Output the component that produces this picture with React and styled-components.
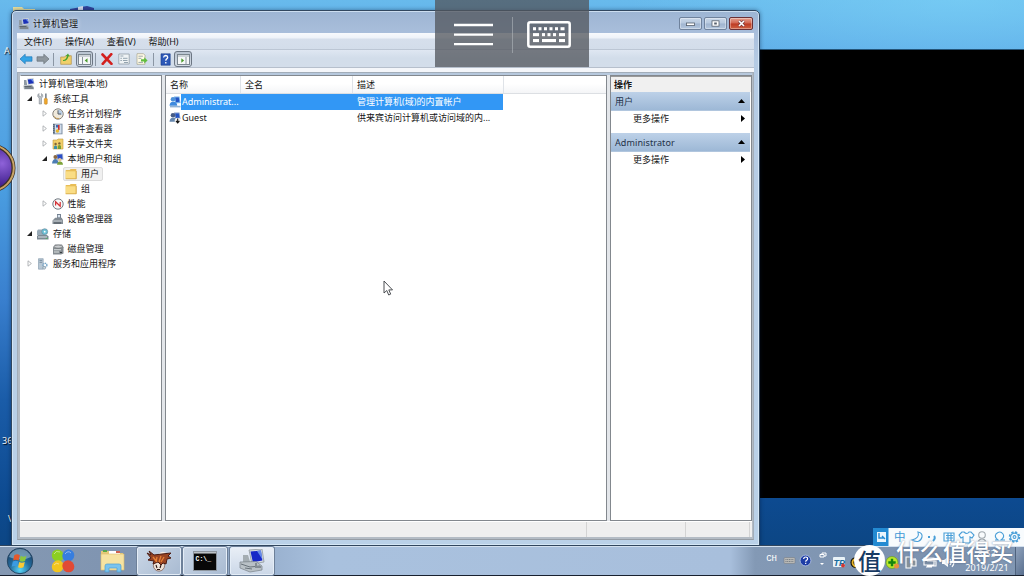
import React from 'react';
import styled, { createGlobalStyle } from 'styled-components';

const GlobalStyle = createGlobalStyle`
    * { box-sizing: border-box; }
    body {
        margin: 0;
        overflow: hidden;
        font: 9px/15px "Noto Sans", "Noto Sans CJK SC", sans-serif;
        color: #151515;
        cursor: default;
    }
    svg { display: block; flex-shrink: 0; }
`;

const Desktop = styled('div')`
    position: relative;
    width: 1024px;
    height: 576px;
    overflow: hidden;
    background:
        radial-gradient(ellipse 330px 90px at 960px 0, rgba(125,212,248,.6), transparent),
        linear-gradient(#68baec 0, #5eace8 50px, #4a9de0 190px, #397fce 300px, #1a5ca8 400px, #0d4a90 500px, #0c4684 546px);
`;

const BlackScreen = styled('div')`
    position: absolute;
    left: 759px;
    top: 49px;
    width: 265px;
    height: 449px;
    background: #000;
    border-top: 1px solid #245478;
`;

const Wallpaper = styled('svg')`
    position: absolute;
    left: 0;
    top: 0;
`;

const FloatingBall = styled('svg')`
    position: absolute;
    left: 0;
    top: 140px;
`;

const DesktopLabel = styled('span')`
    position: absolute;
    left: ${props => props.$x}px;
    top: ${props => props.$y}px;
    color: #f2f6fa;
    text-shadow: 1px 1px 1px #000;
`;

const Window = styled('div')`
    position: absolute;
    left: 11px;
    top: 10px;
    width: 749px;
    height: 536px;
    display: flex;
    flex-direction: column;
    padding: 0 5px 5px;
    border: 1px solid #31475f;
    border-radius: 5px 5px 0 0;
    background: linear-gradient(#9db5d3 0, #a9bedb 22px, #b5cbe4 50px, #bad1e8 100%);
    box-shadow: inset 0 0 0 1px rgba(220,236,250,.75), 0 0 4px rgba(0,20,50,.45);
`;

const TitleBar = styled('div')`
    display: flex;
    align-items: center;
    height: 22px;
    padding: 3px 0 0 1px;
    gap: 3px;
    flex-shrink: 0;
`;

const Title = styled('span')`
    flex: 1;
    text-shadow: 0 0 5px #fff;
`;

const WindowButtons = styled('div')`
    display: flex;
    gap: 2px;
    padding-right: 1px;
`;

const WindowButton = styled('div')`
    display: flex;
    align-items: center;
    justify-content: center;
    width: ${props => props.$close ? 24 : 23}px;
    height: 13px;
    border: 1px solid ${props => props.$close ? '#6b3035' : '#6f829c'};
    border-radius: 2px;
    background: ${props => props.$close
        ? 'linear-gradient(#e3a08f, #d2634e 48%, #bd3a22 52%, #cf6244)'
        : 'linear-gradient(#c9d7e8, #b7c9df 48%, #9fb4cf 52%, #b4c7de)'};
    box-shadow: inset 0 0 0 1px rgba(255,255,255,.35);
`;

const MenuBar = styled('div')`
    display: flex;
    align-items: center;
    gap: 12.8px;
    height: 17px;
    padding-left: 7px;
    flex-shrink: 0;
    background: linear-gradient(#f8fafd 0, #eef2f9 5px, #d6dfec 6px, #d3ddea 16px);
    border-bottom: 1px solid #bcc6d4;
`;

const ToolBar = styled('div')`
    display: flex;
    align-items: center;
    height: 18px;
    padding-top: 1px;
    flex-shrink: 0;
    background: linear-gradient(#dfe7f2, #d2ddea 8px, #d3ddea);
    border-bottom: 1px solid #b6bfcc;
`;

const Tool = styled('div')`
    display: flex;
    align-items: center;
    justify-content: center;
    width: ${props => props.$w || 17}px;
    height: 16px;
    border: ${props => props.$pressed ? '1px solid #6c7683' : 'none'};
    border-radius: 3px;
    background: ${props => props.$pressed ? 'linear-gradient(#b9c4d1, #d5dde7)' : 'none'};
`;

const ToolSeparator = styled('div')`
    width: 1px;
    height: 13px;
    margin: 0 ${props => props.$gap || 3}px;
    background: #8b96a4;
`;

const Client = styled('div')`
    flex: 1;
    display: flex;
    flex-direction: column;
    min-height: 0;
    padding: 0 1px 2px 2px;
    margin-top: 4px;
    border: 1px solid #a2adb9;
    border-bottom-color: #969da5;
    background: #b4bcc5;
`;

const Strip = styled('div')`
    height: 4px;
    margin-bottom: -4px;
    background: #f4f6fa;
    flex-shrink: 0;
`;

const Panes = styled('div')`
    flex: 1;
    display: flex;
    gap: 3px;
    padding-top: 2px;
    min-height: 0;
    background: linear-gradient(#b6c8dd 2px, #e3e6ea 2px);
`;

const Pane = styled('div')`
    width: ${props => props.$w}px;
    flex: ${props => props.$grow ? 1 : 'none'};
    overflow: hidden;
    background: #fff;
    border: 1px solid #83888e;
    border-left-color: ${props => props.$first ? '#fff' : '#83888e'};
    white-space: nowrap;
`;

const StatusBar = styled('div')`
    display: flex;
    justify-content: flex-end;
    height: 16px;
    flex-shrink: 0;
    background: #efefef;
    border-top: 1px solid #fff;
`;

const StatusCell = styled('div')`
    width: ${props => props.$w}px;
    border-left: 1px solid #d4d4d4;
`;

const TreeRow = styled('div')`
    display: flex;
    align-items: center;
    height: 15px;
    padding-left: ${props => props.$indent}px;
`;

const Arrow = styled('div')`
    width: 10px;
    display: flex;
`;

const TreeLabel = styled('span')`
    display: flex;
    align-items: center;
    gap: 4px;
    height: 14px;
    margin-left: ${props => props.$selected ? -2 : 0}px;
    padding: 0 ${props => props.$selected ? '3px 0 1px' : 0};
    border: ${props => props.$selected ? '1px solid #dcdcdc' : 'none'};
    border-radius: 2px;
    background: ${props => props.$selected ? '#f0f0f0' : 'none'};
`;

const ListHeader = styled('div')`
    display: flex;
    height: 18px;
    border-bottom: 1px solid #dcdfe3;
    background: linear-gradient(#fff, #fff 45%, #f4f5f7);
`;

const HeaderCell = styled('div')`
    width: ${props => props.$w}px;
    padding-left: ${props => props.$pad || 4}px;
    line-height: 17px;
    border-right: 1px solid #dfe3e8;
`;

const ListRow = styled('div')`
    display: flex;
    align-items: center;
    height: 16px;
    padding-left: 3px;
`;

const RowCells = styled('div')`
    display: flex;
    width: 322px;
    height: 16px;
    line-height: 16px;
    color: ${props => props.$selected ? '#fff' : '#151515'};
    background: ${props => props.$selected ? '#3297f5' : 'none'};
`;

const NameCell = styled('span')`
    width: 176px;
    padding-left: 1px;
`;

const ActionsTitle = styled('div')`
    height: 16px;
    padding-left: 3px;
    line-height: 16px;
    font-weight: bold;
    background: #f0f0f0;
    border-top: 1px solid #999;
`;

const ActionGroup = styled('div')`
    display: flex;
    align-items: center;
    justify-content: space-between;
    height: 19px;
    margin-right: 1px;
    padding: 0 5px 0 4px;
    color: #1e3148;
    background: linear-gradient(#bdd1e8, #9db8d6);
    border-bottom: 1px solid #b1c6de;
    letter-spacing: .1px;
`;

const ActionItem = styled('div')`
    display: flex;
    align-items: center;
    justify-content: space-between;
    height: 15px;
    margin-bottom: 7px;
    padding: 0 6px 0 22px;
`;

const Overlay = styled('div')`
    position: absolute;
    left: 435px;
    top: 0;
    width: 154px;
    height: 67px;
    display: flex;
    align-items: center;
    padding: 2px 0 0 19px;
    background: rgba(82,86,92,.76);
`;

const OverlayDivider = styled('div')`
    width: 1px;
    height: 36px;
    margin: 0 14px 0 19px;
    background: rgba(190,195,200,.5);
`;

const Taskbar = styled('div')`
    position: absolute;
    left: 0;
    bottom: 0;
    width: 1024px;
    height: 30px;
    display: flex;
    align-items: center;
    border-top: 1px solid #d3e0ee;
    border-bottom: 1px solid #18202e;
    box-shadow: 0 -1px 0 #31465e;
    background: linear-gradient(90deg, #8498b2 0, #7f94b1 130px, #9ab2d0 275px, #a9c1de 330px, #a8bfdc 730px, #8399b5 755px, #7c92af 900px, #8197b3 100%);
`;

const TaskSlot = styled('div')`
    display: flex;
    align-items: center;
    justify-content: center;
    width: ${props => props.$w || 44}px;
    height: 28px;
    margin-right: ${props => props.$gap || 0}px;
    border: ${props => props.$open ? '1px solid #e4edf7' : 'none'};
    border-radius: 2px;
    background: ${props => props.$active
        ? 'linear-gradient(#e8eef6, #ccd8e8)'
        : props.$open ? 'linear-gradient(135deg, #c9d6e6, #a9bbd2)' : 'none'};
    box-shadow: ${props => props.$open ? '0 0 0 1px #6d8099' : 'none'};
`;

const Tray = styled('div')`
    display: flex;
    align-items: center;
    margin-left: auto;
    height: 28px;
`;

const Language = styled('span')`
    margin: -4px 6px 0 0;
    color: #fff;
    font: 9px "Liberation Mono", monospace;
`;

const Notifications = styled('div')`
    margin-right: -8px;
`;

const Clock = styled('div')`
    width: 56px;
    display: flex;
    flex-direction: column;
    align-items: center;
    color: #fff;
    line-height: 14px;
    letter-spacing: .1px;
`;

const ShowDesktop = styled('div')`
    width: 9px;
    height: 28px;
    border-left: 1px solid #4f637e;
    background: linear-gradient(120deg, #90a3bd, #596f8e);
`;

const ImeBar = styled('div')`
    position: absolute;
    left: 873px;
    top: 528px;
    width: 151px;
    height: 18px;
    background: #f8fbfd;
`;

const Watermark = styled('div')`
    position: absolute;
    left: 854px;
    top: 545px;
    display: flex;
    color: #fff;
    font-family: "Noto Sans CJK SC", sans-serif;
`;

const WatermarkBadge = styled('span')`
    width: 31px;
    height: 31px;
    border-radius: 50%;
    background: #fff;
    color: #173a63;
    font-size: 23px;
    font-weight: 500;
    line-height: 30px;
    text-align: center;
`;

const WatermarkText = styled('span')`
    margin: -5px 0 0 11px;
    font-size: 23.5px;
    font-weight: 500;
    line-height: 22px;
    text-shadow: 0 0 2px rgba(60,80,110,.7);
`;

const Pointer = styled('svg')`
    position: absolute;
    left: 383px;
    top: 280px;
`;

const Svg = ({ w = 12, h = w, box, children }) => (
    <svg width={w} height={h} viewBox={box || '0 0 12 12'}>{children}</svg>
);

const ComputerIcon = ({ size = 12 }) => (
    <Svg w={size}>
        <path d="M4 0.8 10.5 0 11.5 6 5 7z" fill="#cbd2d8" />
        <path d="M4.8 1.6 9.8 1 10.7 5.3 5.6 6.1z" fill="#1b32b8" />
        <path d="M7.6 1.3 9.8 1 10.5 4.6z" fill="#6c90ec" />
        <path d="M1 2h2.4l.8 5H1z" fill="#8f9aa4" />
        <path d="M0.5 7.5 9 7l2 2.3v1.9H1z" fill="#9ca5ad" />
        <path d="M1.5 8.5h7M2 10h8" stroke="#4c555d" strokeWidth=".8" />
    </Svg>
);

const ToolsIcon = () => (
    <Svg>
        <path d="M2 .5v2.3l1.2 1 1.2-1V.5l1.3 1.3v2L4.5 5v6H2.2V5L.8 3.8v-2z" fill="#bdc3c8" stroke="#747d85" strokeWidth=".5" />
        <path d="M8 .5h1.700v5H8z" fill="#818b94" />
        <rect x="7.3" y="5.3" width="3" height="6" rx="1" fill="#f0a62a" stroke="#a9731d" strokeWidth=".4" />
    </Svg>
);

const ClockIcon = () => (
    <Svg>
        <circle cx="6" cy="6" r="5.2" fill="#efe9dc" stroke="#85817b" />
        <path d="M6 6V1.500A4.500 4.500 0 0 1 10.400 7z" fill="#b6cce4" />
        <path d="M6 2.300V6h3" fill="none" stroke="#595d63" />
        <path d="M2 8.500a5 5 0 0 0 5 2" fill="none" stroke="#c29b58" />
    </Svg>
);

const EventIcon = () => (
    <Svg>
        <path d="M1 .7h9.500v10.600H1z" fill="#7c8da1" />
        <path d="M3 1.500h6.500v9H3z" fill="#d3dfed" />
        <path d="M4 2h2v2.500H4z" fill="#3c68b4" />
        <path d="M6.800 2v5" stroke="#cf2d2d" strokeWidth="1.6" />
        <circle cx="5.4" cy="8" r="1.7" fill="#e6b72d" />
        <path d="M1.800 1v10" stroke="#475463" strokeDasharray="1 1" />
    </Svg>
);

const ShareIcon = () => (
    <Svg>
        <path d="M1 2h4l1-1h5v10H1z" fill="#f1cf69" stroke="#c29b3e" strokeWidth=".6" />
        <circle cx="3.6" cy="6" r="1.2" fill="#806436" />
        <path d="M2 11V8.500q1.600-2 3 0V11z" fill="#3b8fa8" />
        <circle cx="7.4" cy="5.4" r="1.2" fill="#806436" />
        <path d="M5.800 11V8q1.600-2 3.200 0v3z" fill="#769e34" />
    </Svg>
);

const UsersIcon = () => (
    <Svg>
        <path d="M4 1 11 .4 11.5 7 5 7.4z" fill="#b9c6d5" />
        <path d="M5 1.8 10.2 1.2 10.6 6 5.8 6.3z" fill="#2b4ec6" />
        <circle cx="3.4" cy="4" r="2" fill="#8b6a43" />
        <path d="M0 10.5Q.5 6 3.4 6 6 6 6.7 10.5z" fill="#4d7db4" />
        <circle cx="7.8" cy="6.8" r="1.8" fill="#e5c394" />
        <path d="M5 11.7q.5-3.4 3-3.2 2.7 0 3 3.2z" fill="#7da339" />
    </Svg>
);

const FolderIcon = () => (
    <Svg>
        <path d="M.7 2h4l1-.9h5.6v9.7H.7z" fill="#e8bd56" />
        <path d="M.7 3.3h10v7.5H.7z" fill="#fadd85" />
        <path d="M.7 10.8h10.6V3" fill="none" stroke="#cf9e37" strokeWidth=".7" />
    </Svg>
);

const PerformanceIcon = () => (
    <Svg>
        <circle cx="6" cy="6" r="5.2" fill="#f7f7f7" stroke="#747b83" />
        <path d="M3.6 7.500V3.800l4.600 4.500V4" fill="none" stroke="#d53034" strokeWidth="1.2" />
        <path d="m2.6 3 1.500 1" stroke="#cd4044" strokeWidth=".8" />
    </Svg>
);

const DeviceIcon = () => (
    <Svg>
        <path d="M5 1h4v4.5H5z" fill="#758292" />
        <path d="M5.8 2H8v2.4H5.8z" fill="#d9e4ef" />
        <path d="m2 6 1.2-1.3h6.5L11 7v4H.5V7.5z" fill="#838c94" />
        <path d="M1.2 8h9" stroke="#cbd1d5" />
        <path d="M2 10h7" stroke="#495158" />
    </Svg>
);

const StorageIcon = () => (
    <Svg>
        <path d="M1 1.5h6L8 4v3H0V3z" fill="#98aab7" />
        <circle cx="7.7" cy="3.7" r="3" fill="#6cc0d6" stroke="#688393" strokeWidth=".6" />
        <circle cx="7.7" cy="3.7" r=".9" fill="#fff" />
        <path d="M1 7h9l1.5 1.6v3H0V8z" fill="#7d8993" />
        <path d="M1 9h9" stroke="#d9e0e5" />
        <path d="M8.8 10.4h1.6" stroke="#50b35c" />
    </Svg>
);

const DiskIcon = () => (
    <Svg>
        <path d="M1 4.2 3 1.5h7l1.5 2.7v6.2L9 11.5H1z" fill="#858c91" />
        <ellipse cx="6.2" cy="3.6" rx="4" ry="1.5" fill="#c9cdd0" stroke="#666" strokeWidth=".5" />
        <path d="M2 6.8h7M2 9h5" stroke="#dee1e2" strokeWidth="1.1" />
        <path d="M8 9.5h2" stroke="#373d40" />
    </Svg>
);

const ServicesIcon = () => (
    <Svg>
        <path d="M1.5.7h4.7v10.5H1.5z" fill="#b7c7d4" stroke="#7f95a7" strokeWidth=".6" />
        <path d="M2.5 2.4h2.6M2.5 4.3h2.6" stroke="#5e7486" strokeWidth=".7" />
        <circle cx="8" cy="7.2" r="1.9" fill="none" stroke="#74a5c8" strokeWidth="1.4" strokeDasharray="1.1 .5" />
        <circle cx="7.2" cy="9.8" r="1.4" fill="#c9d6df" stroke="#8799a6" strokeWidth=".7" />
    </Svg>
);

const UserIcon = ({ disabled }) => (
    <Svg>
        <path d="M5 .5h5.5L11.5 7 6 7.4z" fill={disabled ? '#7f99ca' : '#75b1ea'} />
        <path d="M6.3 1.4h3.5l.6 4.4-3.4.4z" fill="#2454c4" />
        <circle cx="4" cy="3.3" r="2.3" fill={disabled ? '#465c86' : '#4c91d9'} />
        <path d="M.5 9.8q.4-4.3 3.8-4 3.6 0 4 4z" fill={disabled ? '#6788af' : '#3f8ade'} />
        {disabled && <>
            <circle cx="8.7" cy="8.8" r="3" fill="#f4f4f4" />
            <path d="M8.7 6.5v4.2M7 8.9l1.7 2 1.7-2" fill="none" stroke="#111" strokeWidth="1.1" />
        </>}
        {!disabled && <path d="M1 10.6h10.500" stroke="#8fb2d6" strokeWidth="1.6" />}
    </Svg>
);

const NavArrow = ({ back }) => (
    <Svg w={14} h={12} box="0 0 14 12">
        <path
            d="M1 6 6.2 1.2v2.6H13v4.4H6.2v2.6z"
            transform={back ? undefined : 'matrix(-1 0 0 1 14 0)'}
            fill={back ? '#33a4e6' : '#8e979e'}
            stroke={back ? '#2379b9' : '#697178'}
            strokeWidth=".7"
        />
    </Svg>
);

const PaneIcon = ({ right }) => (
    <Svg w={13} h={11} box="0 0 13 11">
        <rect x=".5" y=".5" width="12" height="10" fill="#f5f7f8" stroke="#7c8790" />
        <path d="M1 2h11" stroke="#a5afb8" />
        <path d={right ? 'M9 3v7.5' : 'M4.5 3v7.5'} stroke="#89949d" />
        <path d={right ? 'm4.3 4.3 2.8 2.2-2.8 2.2z' : 'M9.5 4.3 6.7 6.5l2.8 2.2z'} fill="#4b9c2c" />
    </Svg>
);

const UpFolderIcon = () => (
    <Svg>
        <path d="M.7 4h4l1-1.3h5.6v8.6H.7z" fill="#f0d06b" stroke="#b3914a" strokeWidth=".7" />
        <path d="M3 7q3 0 4-4L5.5 3.2 8 .4l1.8 3-1.3-.2Q7.5 8.3 3 8z" fill="#46a431" />
    </Svg>
);

const DeleteIcon = () => (
    <Svg>
        <path d="m1.500 1.500 9 9.300M10.300 1.200l-8.600 9.600" stroke="#d3201e" strokeWidth="2.6" strokeLinecap="round" />
    </Svg>
);

const PropertiesIcon = () => (
    <Svg>
        <path d="M.8 1h10.4v10H.8z" fill="#eff3f5" stroke="#929da6" strokeWidth=".8" />
        <path d="M2.4 3h3M2.4 5.3h1.5M2.4 7.5h1.5M5 5.3h4.5M5 7.5h4.5M6 9.5h4" stroke="#94a4b0" />
    </Svg>
);

const ExportIcon = () => (
    <Svg>
        <path d="M1 .7h6.5L9 2.3v9H1z" fill="#fffbe6" stroke="#a7a48d" strokeWidth=".7" />
        <path d="M2.4 3.2h4.5M2.4 5.3h3M2.4 9.4H7" stroke="#85949c" strokeWidth=".8" />
        <path d="M5 6.3h3.2V4.2l3.4 3.2-3.4 3.2V8.5H5z" fill="#61bd40" />
    </Svg>
);

const HelpIcon = () => (
    <Svg w={11} h={13} box="0 0 11 13">
        <path d="M1 .8h9.2v11.4H1z" fill="#2c58b8" stroke="#193b86" strokeWidth=".6" />
        <path d="M3.6 4.5q.2-2 2.1-2 2 .1 2 1.7 0 1-1 1.7-.9.6-.9 1.8M5.8 9v1.4" fill="none" stroke="#fff" strokeWidth="1.3" />
    </Svg>
);

const ExpandArrow = ({ open }) => (
    <Svg w={6} h={7} box="0 0 6 7">
        {open
            ? <path d="M5 1v5H0z" fill="#222" />
            : <path d="m1 .8 3.4 2.7L1 6.2z" fill="#fff" stroke="#a1a4a8" strokeWidth=".8" />}
    </Svg>
);

const TREE = [
    { label: '计算机管理(本地)', Icon: ComputerIcon, indent: 2, root: true },
    { label: '系统工具', Icon: ToolsIcon, indent: 6, open: true },
    { label: '任务计划程序', Icon: ClockIcon, indent: 20.5, open: false },
    { label: '事件查看器', Icon: EventIcon, indent: 20.5, open: false },
    { label: '共享文件夹', Icon: ShareIcon, indent: 20.5, open: false },
    { label: '本地用户和组', Icon: UsersIcon, indent: 20.5, open: true },
    { label: '用户', Icon: FolderIcon, indent: 34, selected: true },
    { label: '组', Icon: FolderIcon, indent: 34 },
    { label: '性能', Icon: PerformanceIcon, indent: 20.5, open: false },
    { label: '设备管理器', Icon: DeviceIcon, indent: 20.5 },
    { label: '存储', Icon: StorageIcon, indent: 6, open: true },
    { label: '磁盘管理', Icon: DiskIcon, indent: 20.5 },
    { label: '服务和应用程序', Icon: ServicesIcon, indent: 6, open: false }
];

const USERS = [
    { name: 'Administrat...', description: '管理计算机(域)的内置帐户', selected: true },
    { name: 'Guest', description: '供来宾访问计算机或访问域的内...', disabled: true }
];

const Tree = () => (
    <Pane $w={142} $first>
        {TREE.map(({ label, Icon, indent, open, selected, root }) => (
            <TreeRow key={label} $indent={indent}>
                {!root && <Arrow>{open !== undefined && <ExpandArrow open={open} />}</Arrow>}
                <TreeLabel $selected={selected}><Icon />{label}</TreeLabel>
            </TreeRow>
        ))}
    </Pane>
);

const UserList = () => (
    <Pane $grow>
        <ListHeader>
            <HeaderCell $w={75}>名称</HeaderCell>
            <HeaderCell $w={112}>全名</HeaderCell>
            <HeaderCell $w={151}>描述</HeaderCell>
        </ListHeader>
        {USERS.map(user => (
            <ListRow key={user.name}>
                <UserIcon disabled={user.disabled} />
                <RowCells $selected={user.selected}>
                    <NameCell>{user.name}</NameCell>
                    <span>{user.description}</span>
                </RowCells>
            </ListRow>
        ))}
    </Pane>
);

const Actions = () => (
    <Pane $w={142}>
        <ActionsTitle>操作</ActionsTitle>
        {['用户', 'Administrator'].map(group => (
            <React.Fragment key={group}>
                <ActionGroup>
                    {group}
                    <Svg w={7} h={4} box="0 0 7 4"><path d="M3.5 0 7 4H0z" fill="#000" /></Svg>
                </ActionGroup>
                <ActionItem>
                    更多操作
                    <Svg w={4} h={7} box="0 0 4 7"><path d="m0 0 4 3.5L0 7z" fill="#000" /></Svg>
                </ActionItem>
            </React.Fragment>
        ))}
    </Pane>
);

const ManagementWindow = () => (
    <Window>
        <TitleBar>
            <ComputerIcon />
            <Title>计算机管理</Title>
            <WindowButtons>
                <WindowButton><Svg w={9} h={7} box="0 0 9 7"><rect x=".5" y="3" width="8" height="2.6" fill="#fff" stroke="#56606d" strokeWidth=".8" /></Svg></WindowButton>
                <WindowButton><Svg w={9} h={7} box="0 0 9 7"><rect x="1" y=".8" width="7" height="5.4" fill="#fff" stroke="#56606d" strokeWidth=".8" /><rect x="3.2" y="2.5" width="2.6" height="2" fill="#56606d" /></Svg></WindowButton>
                <WindowButton $close><Svg w={9} h={7} box="0 0 9 7"><path d="m2 1 5 5M7 1 2 6" stroke="#6b3035" strokeWidth="2.8" /><path d="m2 1 5 5M7 1 2 6" stroke="#fff" strokeWidth="1.7" /></Svg></WindowButton>
            </WindowButtons>
        </TitleBar>
        <MenuBar>
            <span>文件(F)</span>
            <span>操作(A)</span>
            <span>查看(V)</span>
            <span>帮助(H)</span>
        </MenuBar>
        <ToolBar>
            <Tool><NavArrow back /></Tool>
            <Tool><NavArrow /></Tool>
            <ToolSeparator $gap={2} />
            <Tool $w={20}><UpFolderIcon /></Tool>
            <Tool $pressed><PaneIcon /></Tool>
            <ToolSeparator $gap={2} />
            <Tool><DeleteIcon /></Tool>
            <Tool $w={18}><PropertiesIcon /></Tool>
            <Tool><ExportIcon /></Tool>
            <ToolSeparator />
            <Tool $w={17}><HelpIcon /></Tool>
            <Tool $w={18} $pressed><PaneIcon right /></Tool>
        </ToolBar>
        <Strip />
        <Client>
            <Panes>
                <Tree />
                <UserList />
                <Actions />
            </Panes>
            <StatusBar>
                <StatusCell $w={99} />
                <StatusCell $w={64} />
                <StatusCell $w={3} />
            </StatusBar>
        </Client>
    </Window>
);

const KEY_ROWS = [
    [[6, 3], [11.5, 3], [17, 3], [22.5, 3], [28, 3], [33.5, 4]],
    [[6, 6], [15, 3], [20.5, 3], [26, 3], [32, 6]],
    [[6, 6], [15, 14], [32, 6]]
];

const RemoteOverlay = () => (
    <Overlay>
        <Svg w={39} h={24} box="0 0 39 24">
            <path d="M0 2h39M0 11.6h39M0 21.2h39" stroke="#fff" strokeWidth="2.3" />
        </Svg>
        <OverlayDivider />
        <Svg w={44} h={27} box="0 0 44 27">
            <rect x="1.3" y="1.3" width="41.4" height="24.4" rx="2" fill="none" stroke="#fff" strokeWidth="2.5" />
            {KEY_ROWS.map((row, i) => row.map(([x, w]) => (
                <rect key={`${i}-${x}`} x={x} y={6.2 + i * 5.9} width={w} height="3.1" fill="#fff" />
            )))}
        </Svg>
    </Overlay>
);

const StartOrb = () => (
    <Svg w={28} box="0 0 28 28">
        <defs>
            <radialGradient id="orb" cx=".5" cy=".85" r=".8">
                <stop offset="0" stopColor="#58d4f5" />
                <stop offset=".5" stopColor="#246d9e" />
                <stop offset="1" stopColor="#1b3f66" />
            </radialGradient>
        </defs>
        <circle cx="14" cy="14" r="12.7" fill="url(#orb)" stroke="#254663" />
        <path d="M3 10Q6 2 14 2t11 8q-10 5-22 0" fill="#a9cadd" opacity=".55" />
        <path d="M8.3 8.300q2.900-1.900 5.600 0l-1.300 5.300q-2.500-1.500-5.500-.2z" fill="#e6592b" />
        <path d="M14.700 8.800q2.900 1.700 5.700 0l-1.300 5.200q-2.900 1.500-5.600 0z" fill="#8bc63e" />
        <path d="M6.800 14.500q2.800-1.500 5.500 0L11 19.700q-2.500-1.500-5.300 0z" fill="#3b9be2" />
        <path d="M13.200 15q2.600 1.500 5.600 0l-1.300 5.200q-2.900 1.500-5.400 0z" fill="#fbca35" />
    </Svg>
);

const PetalIcon = () => (
    <Svg w={24} box="0 0 24 24">
        <ellipse cx="6.8" cy="6.6" rx="6.2" ry="5.8" transform="rotate(45 6.8 6.6)" fill="#8ccf22" />
        <ellipse cx="17.3" cy="6.6" rx="6.2" ry="5.8" transform="rotate(-45 17.3 6.6)" fill="#377edf" />
        <ellipse cx="6.8" cy="17.3" rx="6.2" ry="5.8" transform="rotate(-45 6.8 17.3)" fill="#f3c51d" />
        <ellipse cx="17.3" cy="17.3" rx="6.2" ry="5.8" transform="rotate(45 17.3 17.3)" fill="#e14a35" />
        <path d="M3 5q2-4 6-2M14 5q3-4 6-1M3 16q2-3 5-1" fill="none" stroke="#fff" opacity=".45" />
    </Svg>
);

const ExplorerIcon = () => (
    <Svg w={25} h={24} box="0 0 25 24">
        <path d="M1 2h8l1 2h13v17H1z" fill="#e5c979" />
        <path d="M3 1h4v2H3z" fill="#57a74c" />
        <path d="M9 2h11v4H9z" fill="#fff" />
        <path d="M16 2h4v2h-4z" fill="#cf6150" />
        <path d="M1 5h23v16H1z" fill="#f6e3a2" stroke="#dbbd6d" strokeWidth=".6" />
        <path d="M5 23v-6q0-2 2-2h12q2 0 2 2v6h-4v-4H9v4z" fill="#7ac4ee" stroke="#4c9fd4" strokeWidth=".7" />
    </Svg>
);

const BugIcon = () => (
    <Svg w={26} h={22} box="0 0 26 22">
        <circle cx="17" cy="7" r="5.3" fill="#f5ece5" />
        <circle cx="13" cy="15.500" r="5.6" fill="#eee3da" stroke="#6a3a28" strokeWidth=".6" />
        <path d="m1 3 4 2-2-4 5 4 8-1 9-1-3 3 3 2-4 1-1 5-3-1-2 2-3-3-5 2 1-3-6-1 3-2z" fill="#9a4523" stroke="#4b1b12" />
        <path d="m7 7 4 5m0-5-1 5m5-6-2 6m5-5-3 5" stroke="#e68036" strokeWidth="1.3" />
        <path d="m10 15 1 3m4-3-1 3m-3 1.500h3" fill="none" stroke="#28140f" strokeWidth="1.1" />
    </Svg>
);

const TerminalIcon = () => (
    <Svg w={24} h={20} box="0 0 24 20">
        <rect x=".5" y=".5" width="23" height="19" fill="#080808" stroke="#8d959e" />
        <path d="M1 1.8h22" stroke="#d2d8de" strokeWidth="1.4" />
        <text x="2.500" y="9.5" fill="#fff" fontFamily="Liberation Mono" fontSize="6.5" fontWeight="bold">C:\_</text>
    </Svg>
);

const BigComputerIcon = () => (
    <Svg w={26} h={24} box="0 0 26 24">
        <path d="m10 1 13-1 2 13-12 2z" fill="#d5dbdf" stroke="#858e94" strokeWidth=".7" />
        <path d="m11.5 2.4 10.3-.8 1.6 10-9.6 1.5z" fill="#1828c7" />
        <path d="m18 2 4-.4 1.4 9z" fill="#668be8" />
        <path d="M4 6h5l3 10H4z" fill="#a4adb2" />
        <path d="m1 13 16-.5 6 4.5v4l-12 2-10-4z" fill="#b9c1c6" stroke="#778086" strokeWidth=".7" />
        <path d="m2 15 9 3 10-1M6 19l7 1" fill="none" stroke="#69737b" />
        <path d="M17 14v4h5" fill="none" stroke="#838c93" strokeWidth="2" />
    </Svg>
);

const TrayIcons = () => (
    <Svg w={184} h={28} box="0 0 184 28">
        <rect x="1" y="10.500" width="11" height="6" rx="1" fill="#b8b8b5" stroke="#71777e" strokeWidth=".5" />
        <path d="M2.5 12.500h8M2.5 14.500h8" stroke="#747b82" strokeDasharray="1 .7" />
        <circle cx="22.5" cy="13.5" r="5.4" fill="#1d3da6" stroke="#b7c8e7" strokeWidth=".8" />
        <path d="M20.7 12q0-2 2-2t1.9 1.8q0 1-1 1.5-.9.5-.9 1.5m0 1v1.3" fill="none" stroke="#fff" strokeWidth="1.2" />
        <path d="M37 10h4V7.500h-4zM39 7.500V6h4v3h-2" fill="none" stroke="#fff" />
        <path d="M37 16h4l-2 2z" fill="#fff" />
        <rect x="50" y="10" width="12" height="10" rx="1" fill="#e9f2f7" />
        <text x="50.5" y="18.5" fontFamily="Liberation Sans" fontSize="9" fontWeight="bold" fontStyle="italic" fill="#176b9d">TP</text>
        <circle cx="60" cy="18.5" r="2" fill="#d23832" />
        <circle cx="73" cy="15.5" r="5.6" fill="#18150c" />
        <path d="M76 13a3.8 3.8 0 1 0 .6 4.5V16H74" fill="none" stroke="#eab629" strokeWidth="1.8" />
        <circle cx="91" cy="15.5" r="5.3" fill="#333940" />
        <circle cx="109" cy="15.5" r="6" fill="#bce72c" stroke="#669d21" strokeWidth=".7" />
        <path d="M109 11.8v7.4M105.3 15.5h7.4" stroke="#16840e" strokeWidth="2.4" />
        <circle cx="113.5" cy="19" r="2.5" fill="#e8913f" />
        <path d="M123 10h5v11h-5zM129 13h4v6h-4zM130 13v-2m2 2v-2" fill="#88929a" stroke="#fff" strokeWidth="1.1" />
        <path d="M141 11h10v7h-10zM143 20h6M144 14h9v5h-9" fill="#7b8da4" stroke="#fff" strokeWidth="1.1" />
        <path d="M159 13h2l4-3v10l-4-3h-2z" fill="#fff" />
        <path d="M167 12q2.3 3 0 6m2-8q4 5 0 10" fill="none" stroke="#fff" strokeWidth="1.2" />
    </Svg>
);

const Ime = () => (
    <ImeBar>
        <Svg w={151} h={18} box="0 0 151 18">
            <path d="M0 0h15.500v18H0z" fill="#238ad2" />
            <path d="M4 4h9v10H4z" fill="#e9f5fd" />
            <path d="M6 5v5h5m-2-2 3 3" fill="none" stroke="#238ad2" strokeWidth="1.4" />
            <text x="21" y="13" fontFamily="Noto Sans CJK SC" fontSize="11.5" fill="#3e98d5">中</text>
            <g fill="none" stroke="#4a9fd8" strokeWidth="1.1">
                <path d="M45 4q2 6-6 8 8 4 10-3 .7-4-4-5z" />
                <path d="M56 8v2m5-2q2 2-1 5" strokeWidth="2" />
                <path d="M71 5h10v8H71zM73 7.500h7M73 10h7M75 5v8M78 5v8" />
                <path d="m89 4-3 3 2 3 2-1v6h7V9l2 1 2-3-3-3h-2q-2 3-5 0z" />
                <circle cx="109" cy="7" r="3.3" stroke="#a0a9af" />
                <path d="M105 14q1-3 4-3t4 3z" stroke="#a0a9af" />
                <path d="M122 12h3q-4-3-2-6 4-4 7 0 2 3-2 6h4" />
                <circle cx="141.5" cy="9" r="4.9" strokeWidth="1.7" strokeDasharray="2.2 1.65" />
                <circle cx="141.5" cy="9" r="3.9" />
                <circle cx="141.5" cy="9" r="1.4" />
            </g>
        </Svg>
    </ImeBar>
);

const App = () => (
    <>
        <GlobalStyle />
        <Desktop>
            <Wallpaper width="120" height="24">
                <path d="M13 7h9l2 2h11v6H13z" fill="#e8df9d" />
                <path d="m70 9 17-3 7 2v5H70z" fill="#31439a" />
                <path d="m78 7 5-1v4h-5z" fill="#d4dced" />
            </Wallpaper>
            <DesktopLabel $x={4} $y={43}>A</DesktopLabel>
            <DesktopLabel $x={2} $y={433}>36</DesktopLabel>
            <DesktopLabel $x={8} $y={511}>V</DesktopLabel>
            <BlackScreen />
            <ManagementWindow />
            <FloatingBall width="20" height="56">
                <defs>
                    <radialGradient id="ball" cx=".75" cy=".4">
                        <stop offset="0" stopColor="#8f62d9" />
                        <stop offset="1" stopColor="#40208d" />
                    </radialGradient>
                </defs>
                <circle cx="-9" cy="28" r="22.5" fill="url(#ball)" stroke="#3d3028" strokeWidth="4" />
                <circle cx="-9" cy="28" r="22.8" fill="none" stroke="#c9a465" strokeWidth="2" />
            </FloatingBall>
            <Pointer width="12" height="17" viewBox="0 0 12 17">
                <path d="M1 1v12l2.800-2.500L5.700 15l2-.900-1.900-4.200h3.700z" fill="#fff" stroke="#3a3d42" strokeWidth=".9" />
            </Pointer>
            <RemoteOverlay />
            <Taskbar>
                <TaskSlot $w={40}><StartOrb /></TaskSlot>
                <TaskSlot $w={46} $gap={3}><PetalIcon /></TaskSlot>
                <TaskSlot $w={46} $gap={2}><ExplorerIcon /></TaskSlot>
                <TaskSlot $open $gap={2}><BugIcon /></TaskSlot>
                <TaskSlot $open $gap={3}><TerminalIcon /></TaskSlot>
                <TaskSlot $open $active><BigComputerIcon /></TaskSlot>
                <Tray>
                    <Language>CH</Language>
                    <Notifications><TrayIcons /></Notifications>
                    <Clock>
                        <span>8:53</span>
                        <span>2019/2/21</span>
                    </Clock>
                    <ShowDesktop />
                </Tray>
            </Taskbar>
            <Ime />
            <Watermark>
                <WatermarkBadge>值</WatermarkBadge>
                <WatermarkText>什么值得买</WatermarkText>
            </Watermark>
        </Desktop>
    </>
);

export default App;
